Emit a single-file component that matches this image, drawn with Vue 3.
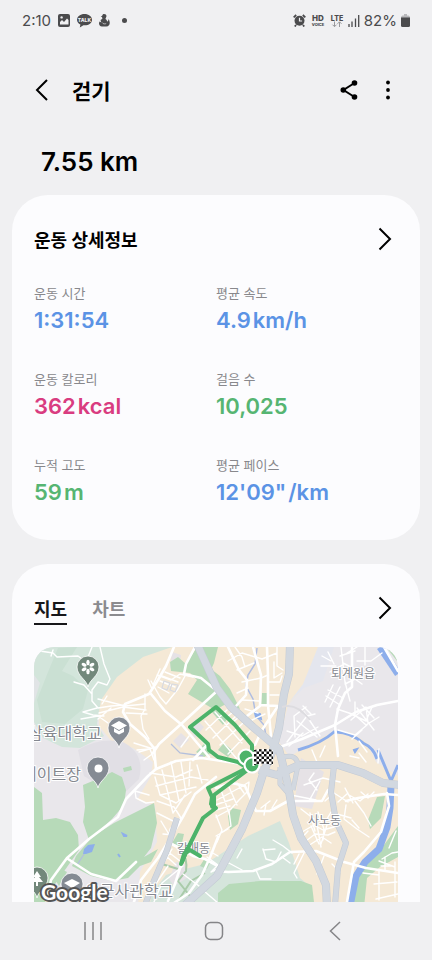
<template>
  <div class="screen">
    <div class="status">
      <div class="status-left">
        <span class="clock">2:10</span>
        <svg width="12" height="13" viewBox="0 0 12 13">
          <rect width="12" height="13" rx="2" fill="#4b4b4d" />
          <path d="M2 10.5V8l2-2 2 2 3-3.500 1.500 1.500v4.500z" fill="#f0f0f2" />
          <circle cx="3.600" cy="3.400" r="1.200" fill="#f0f0f2" />
        </svg>
        <svg width="15" height="14" viewBox="0 0 15 14">
          <path d="M7.500 0C3.300 0 0 2.500 0 5.700c0 2.100 1.400 3.800 3.400 4.800L2.800 13.600 6.400 11.300c5 .500 8.600-2.100 8.600-5.600C15 2.500 11.700 0 7.500 0z" fill="#4b4b4d" />
          <text x="7.500" y="7.700" class="talk">TALK</text>
        </svg>
        <svg width="11" height="13" viewBox="0 0 11 13">
          <path d="M5 0c1.800 0 2.700 1.200 2.400 2.600L6.400 5c1.200.400 1.600 1.500 1.700 2.500.800.100 1.400-.900 1.400-2.500 2 2.900 1.800 7.300-2.200 7.600H3C0 12.300-.600 9.300.600 7.600l1.700.800L1.500 6l1.900-1.300L3 3 1.700 2.400 3.200 1.700C3.500.600 4 0 5 0z" fill="#4b4b4d" />
          <path d="M3.200 8.500c.800 1.500 2.600 1.800 4 1" fill="none" stroke="#f0f0f2" stroke-width=".6" />
        </svg>
        <i class="dot"></i>
      </div>
      <div class="status-right">
        <svg width="13" height="13" viewBox="0 0 13 13">
          <circle cx="6.500" cy="6.800" r="5" fill="#4b4b4d" />
          <path d="M.700 3.400 3.200 1M12.300 3.400 9.800 1M3 11l-1.200 1.500M10 11l1.200 1.500" stroke="#4b4b4d" stroke-width="1.800" />
          <path d="M6.500 3.800v3.200h2.600" fill="none" stroke="#f0f0f2" stroke-width="1.200" />
        </svg>
        <svg width="16" height="16" viewBox="0 0 16 16">
          <text x="8" y="8" class="hd">HD</text>
          <text x="8" y="13" class="voice">VOICE</text>
        </svg>
        <svg width="14" height="14" viewBox="0 0 14 14">
          <text x="7" y="6.500" class="lte">LTE</text>
          <path d="M4.500 7.500v5M2.500 10.700l2 2 2-2M9.500 13V8M7.500 9.800l2-2 2 2" fill="none" stroke="#98989b" />
        </svg>
        <svg width="12" height="13" viewBox="0 0 12 13">
          <path d="M1 10v3M4 7.500V13M7.500 4.500V13M10.700 1v12" stroke="#4b4b4d" stroke-width="1.300" />
        </svg>
        <span class="percent">82%</span>
        <svg width="9" height="13" viewBox="0 0 9 13">
          <path d="M1.500 1.500h1.500V0h3v1.500h1.500Q9 1.500 9 4H0Q0 1.500 1.500 1.500z" fill="#b9b9bc" />
          <path d="M0 3.500h9v8Q9 13 7.500 13h-6Q0 13 0 11.500z" fill="#4b4b4d" />
        </svg>
      </div>
    </div>

    <header class="appbar">
      <button class="icon-btn back" aria-label="뒤로">
        <svg width="14" height="22" viewBox="0 0 14 22"><path d="M12 1 2 11l10 10" /></svg>
      </button>
      <h1>걷기</h1>
      <button class="icon-btn share" aria-label="공유">
        <svg width="18" height="20" viewBox="0 0 18 20">
          <path d="M14.500 3 3.500 10l11 7" />
          <g fill="#000"><circle cx="14.500" cy="3" r="2.800" /><circle cx="3.300" cy="10" r="2.800" /><circle cx="14.500" cy="17" r="2.800" /></g>
        </svg>
      </button>
      <button class="icon-btn more" aria-label="더보기">
        <svg width="6" height="20" viewBox="0 0 6 20">
          <g fill="#000"><circle cx="3" cy="2.500" r="1.900" /><circle cx="3" cy="10" r="1.900" /><circle cx="3" cy="17.500" r="1.900" /></g>
        </svg>
      </button>
    </header>

    <main>
      <p class="distance">7.55 km</p>

      <section class="card">
        <div class="card-head">
          <h2>운동 상세정보</h2>
          <button class="icon-btn" aria-label="운동 상세정보 보기">
            <svg width="14" height="24" viewBox="0 0 14 24"><path d="M1.500 1.500 12 12 1.500 22.500" /></svg>
          </button>
        </div>
        <dl class="stats">
          <div v-for="s in stats" :key="s.label">
            <dt>{{ s.label }}</dt>
            <dd :class="s.color">{{ s.value }}<span v-if="s.unit">{{ s.unit }}</span></dd>
          </div>
        </dl>
      </section>

      <section class="card map-card">
        <div class="card-head">
          <div class="tabs">
            <button
              v-for="t in tabs"
              :key="t"
              class="tab"
              :class="{ active: t === tab }"
              @click="tab = t"
            >{{ t }}</button>
          </div>
          <button class="icon-btn" aria-label="지도 보기">
            <svg width="14" height="24" viewBox="0 0 14 24"><path d="M1.500 1.500 12 12 1.500 22.500" /></svg>
          </button>
        </div>

        <svg class="map" viewBox="34 647 364 280">
          <defs>
            <pattern id="check" x="254" y="749" width="5" height="5" patternUnits="userSpaceOnUse">
              <rect width="5" height="5" fill="#fff" />
              <path d="M0 0h2.500v5H5V2.500H0z" fill="#111" />
            </pattern>
          </defs>

          <!-- land -->
          <rect x="34" y="647" width="364" height="280" fill="#e9e7eb" />
          <path d="M148 652 172 647H318L311 672 299 693 288 705 279 742 290 757 307 745 335 731 350 732 366 742 376 762 398 776V927H137L140 872 157 842 155 805 137 800 151 776 153 762 133 748 112 742 99 726 98 703 116 675z" fill="#f5e9d6" />
          <path d="M34 647H172L143 657 117 677 101 700 97 724 104 736 80 748 62 747 43 738 34 722z" fill="#d3e5db" />
          <path d="M34 675 40 683 34 703z" fill="#e1e4e6" />
          <path d="M77 647 62 671 73 676 88 690 83 709 65 724 42 722 37 700 48 672 58 648z" fill="#cae0d3" />
          <path d="M145 927 152 893 166 875 181 870 205 864 216 857 248 836 280 821 289 843 300 878 312 888 310 927z" fill="#d5e5dc" />
          <path d="M78 750Q96 738 121 741 146 753 139 779L119 798 84 776z" fill="#e1dfe5" />
          <path d="M288 704 304 688 323 681 334 647H318L303 684z" fill="#e4e6ee" />
          <path d="M301 758 324 772 312 809 294 806zM188 727l8-8 8 8-9 11zM173 741l8-8 8 7-9 8zM172 652l9 3-2 16-9-3zM176 862l9 2 2 14-13 8-5-7z" fill="#e6e2e6" />

          <!-- parks -->
          <g fill="#b7dab9">
            <path d="M83 785 100 778 112 772 122 777 126 790 124 805 112 819 89 840 83 822 85 807z" />
            <path d="M34 787 42 793 43 820 56 818 70 822 78 835 79 850 53 887 47 927H34z" />
            <path d="M76 856 92 837 114 823 154 803 157 823 151 848 144 857 158 849 151 862 140 866 128 878 112 881 91 876 72 866z" />
            <path d="M178 657 186 664 197 647H218L214 663 210 672 214 688 222 694 226 704 215 710 188 694 197 680 190 673 171 671 170 662z" />
            <path d="M211 669 220 676 230 689 240 709 232 706 222 689 212 681z" />
            <path d="M214 700l14 18-5 7-12-14zM262 693h7v11h-8zM204 744l9 8-9 5-8-5zM224 743l9 8-5 6-10-7z" />
            <path d="M218 902 218 893 229 884 260 881 301 881 312 885 314 902V927H218z" />
            <path d="M377 797 385 796 381 818 370 829 368 820zM345 927 351 890 365 862 384 845 398 826V857L380 867 367 878 362 927z" />
            <path d="M232 808l9 2-3 14-8 6-2-14zM123 768l8-2 1 4-8 2zM178 833l6 1-3 13-9-4zM53 876l6-8 8 4-8 14zM205 858l6 3-4 8-7-3z" />
            <path d="M386 647h4l7 10v4z" />
          </g>
          <path d="M180 849q8 9 6 22l-8 10 16 20M166 854l-4 10 16 5M205 873l-14 8-13 20" fill="none" stroke="#a9cbaa" stroke-width="2" />

          <!-- water -->
          <g fill="none" stroke="#8daeeb">
            <path d="M380 647 398 674" stroke-width="7" />
            <path d="M298 750Q322 743 334 732 349 731 363 743 374 748 377 759M378 750 391 781 398 765" stroke-width="3" />
            <path d="M391 785 390 808 387 827 379 849 365 862 356 876 350 906" stroke-width="7" />
            <path d="M257 648 255 664 248 675 246 686 253 699 256 716 264 725 267 741" stroke="#afbde2" stroke-width="1.500" />
            <path d="M171 744 180 753 203 756M77 865 90 845" stroke="#b3bfdc" stroke-width="1.300" />
            <path d="M255 713l5 1 1 5-5-2zM123 834l4 2-3 0zM118 854l2 3M354 750l3-1-2 3z" fill="#8daeeb" stroke-width="2" />
            <path d="M84 849l4-4 7-1-3 8-6 2-3 0z" fill="#8daeeb" stroke="none" />
          </g>

          <!-- streets -->
          <g fill="none" stroke="#fff" stroke-linejoin="round" stroke-linecap="round">
            <g stroke-width="2.600">
              <path d="M174 647 166 666 158 680 149 694 125 704 123 712 130 724 145 737 154 748 156 769 148 776 126 799 118 817 89 839 67 858 51 880 46 905" />
              <path d="M151 694 165 711 182 725 209 757M195 647 186 664 184 674 201 678 217 691 231 704M217 691 180 725 159 744 153 753" />
              <path d="M156 769 176 761 202 758 242 764M68 859 91 874 116 881 136 862M216 777 195 794 184 815 168 842 158 858 141 880 133 905" />
              <path d="M228 647 239 670 247 680 246 695 236 706M253 647 261 675 260 706 243 719M267 647 268 675 268 705 272 747M260 705 278 706 262 730 255 745" />
              <path d="M216 871 228 872 253 871 272 864 290 852 316 851 344 862 366 868 398 873M280 747 302 739 335 725 356 712 377 705 398 701" />
              <path d="M216 788 232 783 245 786 256 811 270 811 288 801 322 801 328 790M346 801 358 798 384 794 398 795" />
              <path d="M335 725 338 709 345 693 352 687 352 647M335 725 338 756M384 647 398 671M387 793 389 806 381 832 364 852 354 862 347 902" />
              <path d="M208 744 193 760M168 842 181 849 193 856 205 859 216 865M218 837 211 855 202 875 189 893 171 905M181 865 175 884 168 901" />
            </g>
            <g stroke-width="1.400">
              <path d="M40 651 53 653 57 657 78 656 86 662 92 647M53 650 51 656M100 647 104 664 110 679 107 685 98 682 92 690 92 701 98 708 111 706 125 705M74 682l10 3 8 9M97 708l-14 4 10 3 11 1M98 699l27 7 20-2M99 713l24-6 23 3M98 719l13-11M102 704l5-8M81 719l17-3 10 7" />
              <path d="M151 681 160 697 166 704 178 689 185 676M157 675 171 680 180 674 193 677M160 669 153 685M165 672l15 6M162 676l16 6M160 681l15 6M158 687l11 6M145 694v15l-4 7 2 13 6 10M126 713l21 1M148 680l4 9" />
              <path d="M164 681l6 2-3 7-5-2zM172 684l6 1-3 7-5-2z" stroke="#d7dae2" stroke-width="1.200" />
              <path d="M206 730 227 710M213 738 236 716M220 745 243 723M228 754 250 731M205 721l32 38M215 712l27 31M198 736l15 17M228 716l9-7M233 722l10-8M181 747l8-11M134 743l16 5M139 752l17-5M144 760l11-8" />
              <path d="M228 661 242 653 262 659 277 653M237 670 254 663M242 682 261 678 268 675M235 647l7 10 3 10M277 647v19l6 4M274 662v16l8-5M269 682h11l2-6M270 695h9M237 693l11-5M242 700l17 1M245 709l13 4M252 720l13-6" />
              <path d="M137 750 150 749 154 760M150 773l26 4 16-7M155 777l5 18 16 8 15-11M156 786l35-9 17 3M160 795l36-8M162 770l11 43 12-18M171 762l8 39M181 762l5 31M190 762l-1 24M197 765l5 18M157 801l17 6 7 11-11 11-2 13M149 795l-14-4 1 7 10 5 8-1M157 813l16 8M161 821l9 15M163 834l10 1M167 851l13 10M166 856l10 9M172 849l-7 12" />
              <path d="M217 800 241 787 249 782 248 791 239 800 231 809 216 817M221 790l8 23M229 787l8 18M237 783l7 10M215 805l18-6M216 810l14-4M216 815l6 15-5 12M229 811l2 15-10 7M216 836l12-7M218 856l-7-4" />
              <path d="M232 853l-5 9 15 8M242 849l-5 9M263 849l3 10 10 3 5-10M263 850l12-1M273 840l10 6 9 7M256 870l4 9 11 0M282 857l8 6M304 853l-10 20 3 5M299 854l-5 10M266 804l-2 11M277 800l-5 8M261 808l9-7" />
              <path d="M286 794l30 6M304 785l19-7 17 4M309 801l11-20M317 790l-8-10 5-7M325 801l9-8 14 9M338 802l10-9M345 788l8 15M349 795l11 6 8-7M361 792l7 6 6-6M346 805l-2 14 13 10 12 8M355 801l9 12 7 13M337 814l14 4M352 820l7 8" />
              <path d="M301 809l13 10M310 813l5 18M318 812l6 17-1 11M331 812l-7 12M302 832l12-7 9 5 11-3M306 841l9-7 13 1 7-3M308 846l14-9 9 6M311 826l8 18M317 825l4 22M327 825l-6 19M299 841l9-10M324 856l-7 18M332 864l8 8" />
              <path d="M287 731l15 5 16-9M295 737l-1-21 12-9M287 742l20-26 8-2M297 721l20 16M304 712l16 24M289 746l14-13M303 706l8 8M341 647l4 35 5 19M347 653l10-6M357 661h14l11-8M365 647v18M344 664l-14 8M346 672l13 3M345 684l10-5 7 5M328 690l15 8M326 696l14 9M333 685l-8 17M340 687l-10 20M337 709l18 6 11 10 13-8M351 720l15-13 2 16M357 708l17 22M362 705l12 13M351 714l15 7 6-14M355 702v13M322 656l9 5M321 666l15 0M328 652l6 12M338 730l17 5 12-10M352 739l10-9M379 749l-1 14M340 656l15-5M343 663l14 7M350 674l14-5" />
              <path d="M379 871v29M395 862v35M376 899l22-5M382 859l10-6 6-1M379 861l16 6M385 857v14M381 866h10M389 848l7-17M363 873l16 2M374 884l23-2M359 753l7 9M350 756l9 2M312 750l5 12M325 746l-5 11M367 752l-8-11" />
              <path d="M153 888l15-22M154 902l8-19 21-17M207 857l11 8-7 7 9-4M183 874l16 12M204 891l14 12" />
            </g>
          </g>

          <!-- highways -->
          <g fill="none" stroke-linejoin="round">
            <g v-for="layer in casing" :key="layer.color" :stroke="layer.color">
              <path d="M197 644 217 688 231 707 253 727 279 749 288 785 293 815 301 838 316 861 326 885 328 930" :stroke-width="layer.w" />
              <path d="M290 644 289 674 284 694 279 728 273 750 264 771 257 793 242 829 217 876 185 905" :stroke-width="layer.w" />
              <path d="M259 770 277 775 299 765 338 765 363 773 383 783 400 785" :stroke-width="layer.w" />
              <path d="M334 766 331 792 336 821 346 843 338 868 333 930" :stroke-width="layer.w - 2" />
              <path d="M177 818 167 850 153 883 144 908" :stroke-width="layer.w - 2" />
              <path d="M284 757Q297 754 298 765L293 790M280 767v17l8 9" :stroke-width="layer.w - 3" />
            </g>
            <path d="M282 707Q296 702 310 720" stroke="#dddce0" stroke-width="2" />
          </g>

          <!-- places -->
          <g class="place">
            <text x="331" y="678" font-size="12">퇴계원읍</text>
            <text x="308" y="825" font-size="12">사노동</text>
            <text x="177" y="853" font-size="12">갈매동</text>
            <text x="28" y="739" font-size="16">삼육대학교</text>
            <text x="22" y="780" font-size="16">케이트장</text>
            <text x="85" y="897" font-size="16">육군사관학교</text>
          </g>
          <g stroke="#fff" stroke-width=".8">
            <path :d="pin" transform="translate(88 667)" fill="#72887b" />
            <path :d="pin" transform="translate(119 728)" fill="#858b94" />
            <path :d="pin" transform="translate(98 768)" fill="#858b94" />
            <path :d="pin" transform="translate(37 878)" fill="#72887b" />
            <path :d="pin" transform="translate(72 884)" fill="#858b94" />
          </g>
          <g fill="#fff">
            <circle cx="98.500" cy="768.500" r="4" />
            <path d="M119 721l8 4.500-8 4.500-8-4.500zM114 728l5 3 5-3v4l-5 2.500-5-2.500zM126 726v5M72 879l8 4-8 5-8-5z" />
            <path d="M37 871l-4 6h2l-4 5h5v4h2v-4h5l-4-5h2z" />
            <ellipse v-for="a in petals" :key="a" cx="88" cy="662.500" rx="1.700" ry="2.700" :transform="`rotate(${a} 88 667)`" />
          </g>

          <!-- recorded track -->
          <g fill="none" stroke="#4db36a" stroke-width="4" stroke-linejoin="round" stroke-linecap="round">
            <path d="M252 754V745L235 725 216 707 190 727 208 744 209 750 218 757 238 762 249 769" />
            <path d="M249 767 208 788 212 797 211 804 216 808 203 818 188 848 181 864 184 854 190 850 200 856" />
            <path d="M249 769 214 795 213 806M187 849 182 862" />
            <path d="M213 797V806" stroke-width="6" />
          </g>
          <g fill="#4db36a" stroke="#fff" stroke-width="2.200">
            <circle cx="246" cy="757" r="7.500" />
            <circle cx="252" cy="765" r="7.500" />
            <path d="M253.500 752v14" />
          </g>
          <path d="M254 750q10-2 19 0v15q-9-3-19 0z" fill="url(#check)" />

          <text x="41" y="900" class="google">Google</text>
        </svg>
      </section>
    </main>

    <nav>
      <button class="icon-btn" aria-label="최근 앱">
        <svg width="20" height="20" viewBox="0 0 20 20"><path d="M2 1v18M10 1v18M18 1v18" /></svg>
      </button>
      <button class="icon-btn" aria-label="홈">
        <svg width="20" height="20" viewBox="0 0 20 20"><rect x="1.500" y="1.500" width="17" height="17" rx="5" /></svg>
      </button>
      <button class="icon-btn" aria-label="이전">
        <svg width="12" height="20" viewBox="0 0 12 20"><path d="M11 1 1.500 10l9.500 9" /></svg>
      </button>
    </nav>
  </div>
</template>

<script setup>
import { ref } from 'vue';

const tabs = ['지도', '차트'];
const tab = ref('지도');

const stats = [
  { label: '운동 시간', value: '1:31:54', color: 'blue' },
  { label: '평균 속도', value: '4.9', unit: 'km/h', color: 'blue' },
  { label: '운동 칼로리', value: '362', unit: 'kcal', color: 'pink' },
  { label: '걸음 수', value: '10,025', color: 'green' },
  { label: '누적 고도', value: '59', unit: 'm', color: 'green' },
  { label: '평균 페이스', value: '12\'09"', unit: '/km', color: 'blue' }
];

// highway outline first, then the fill on top
const casing = [
  { color: '#c3cad4', w: 8 },
  { color: '#d2d8e0', w: 7 }
];
const pin = 'M0 20C-1 13-11 9-11 0A11 11 0 0 1 11 0C11 9 1 13 0 20z';
const petals = [0, 60, 120, 180, 240, 300];
</script>

<style>
body {
  background: #f0f0f2;
}
</style>

<style scoped>
.screen {
  display: flex;
  flex-direction: column;
  height: 100vh;
  background: #f0f0f2;
  color: #000;
  font-family: Inter, "Noto Sans CJK KR", sans-serif;
}

svg {
  display: block;
  flex: none;
}

/* status bar */
.status {
  display: flex;
  flex: none;
  justify-content: space-between;
  height: 41px;
  padding: 0 22px;
  color: #4b4b4d;
  font-size: 15px;
}

.status-left,
.status-right {
  display: flex;
  align-items: center;
}

.status-left {
  gap: 7px;
}

.status-right {
  gap: 4px;
}

.dot {
  width: 5px;
  height: 5px;
  margin-left: 5px;
  border-radius: 50%;
  background: #4b4b4d;
}

.talk,
.hd,
.voice,
.lte {
  font-family: Inter, sans-serif;
  font-weight: 800;
  text-anchor: middle;
  fill: #4b4b4d;
}

.talk {
  font-size: 5px;
  fill: #f0f0f2;
}

.hd {
  font-size: 8px;
}

.voice {
  font-size: 4px;
}

.lte {
  font-size: 7px;
}

/* title bar */
.icon-btn {
  display: flex;
  align-items: center;
  justify-content: center;
  padding: 0;
  border: none;
  background: none;
}

.icon-btn svg {
  fill: none;
  stroke: #000;
  stroke-width: 2;
}

.appbar {
  display: flex;
  flex: none;
  align-items: center;
  height: 56px;
  margin-top: 21px;
  padding: 0 41px 0 35px;
}

.back {
  margin-right: 23px;
}

h1 {
  flex: 1;
  margin: 0;
  font-size: 21px;
  font-weight: 700;
}

.share {
  margin-right: 27px;
}

.more svg,
.share g {
  stroke: none;
}

main {
  flex: 1;
  min-height: 0;
  overflow: hidden;
  padding: 0 12px;
}

.distance {
  margin: 28px 29px 17px;
  font-size: 26px;
  font-weight: 600;
  line-height: 32px;
}

/* cards */
.card {
  margin-bottom: 24px;
  padding: 24px 22px 31px;
  border-radius: 36px;
  background: #fcfcfe;
}

.card-head {
  display: flex;
  align-items: center;
  justify-content: space-between;
  height: 40px;
  padding-right: 6px;
}

h2 {
  margin: 0;
  font-size: 18px;
  font-weight: 700;
}

.stats {
  display: grid;
  grid-template-columns: 1fr 1fr;
  row-gap: 32px;
  margin: 24px 0 0;
}

dt {
  color: #88888c;
  font-size: 13px;
  line-height: 20px;
}

dd {
  margin: 0;
  font-size: 22px;
  font-weight: 600;
  line-height: 34px;
}

dd span {
  margin-left: 2px;
}

.blue {
  color: #5b93e5;
}

.pink {
  color: #d93c80;
}

.green {
  color: #56b572;
}

.tabs {
  display: flex;
  gap: 25px;
}

.tab {
  padding: 6px 0 0;
  border: none;
  border-bottom: 2px solid transparent;
  background: none;
  color: #8b8b8f;
  font-family: inherit;
  font-size: 18px;
  font-weight: 700;
  line-height: 26px;
}

.tab.active {
  border-color: #17171a;
  color: #17171a;
}

/* map */
.map {
  width: 100%;
  margin-top: 19px;
  border-radius: 20px;
}

.place {
  font-family: "Noto Sans CJK KR", sans-serif;
  fill: #85888f;
  stroke: #fff;
  stroke-width: 2px;
  paint-order: stroke;
}

.google {
  font-family: Lato, sans-serif;
  font-size: 21px;
  font-weight: 700;
  fill: #fff;
  stroke: #555;
  stroke-width: 4px;
  stroke-linejoin: round;
  paint-order: stroke;
}

/* system navigation */
nav {
  display: grid;
  flex: none;
  grid-template-columns: repeat(3, 1fr);
  height: 58px;
  padding: 0 37px 0 32px;
}

nav .icon-btn svg {
  stroke: #858588;
  stroke-width: 1.500;
}
</style>
